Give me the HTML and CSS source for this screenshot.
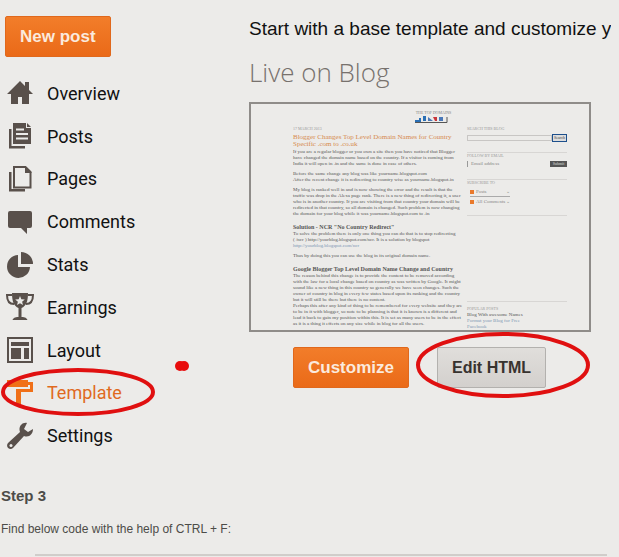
FILE: index.html
```html
<!DOCTYPE html>
<html lang="en">
<head>
    <meta charset="UTF-8">
    <meta name="viewport" content="width=device-width, initial-scale=1.0">
    <title>Blog Template</title>
    <link rel="stylesheet" href="styles.css">
</head>
<body>

    <div class="container">
        <div class="sidebar">
            <button class="btn btn-primary new-post">New post</button>
            <nav class="menu">
                <a href="#">
                    <svg class="icon" viewBox="0 0 28 28"><path d="M14 2 1 15h4v10h7v-7h4v7h7V15h4l-4-4V3h-4v4z"/></svg>
                    Overview
                </a>
                <a href="#">
                    <svg class="icon" viewBox="0 0 28 28"><path d="M3 7h2.500v17H19v2.500H3z"/><path d="M7 1h13v5h5v16H7zM21 1l4 4h-4z"/><path class="cut" d="M10 7.500h8M10 12h12M10 16.500h12"/></svg>
                    Posts
                </a>
                <a href="#">
                    <svg class="icon" viewBox="0 0 28 28"><path d="M3 7h2.500v17H19v2.500H3z"/><path class="line" d="M8 2h11.500l5 5v15.500H8z"/><path d="M19 1l7 7h-7z"/></svg>
                    Pages
                </a>
                <a href="#">
                    <svg class="icon" viewBox="0 0 28 28"><path d="M4 3h20q2 0 2 2v13q0 2-2 2h-3v6l-6-6H4q-2 0-2-2V5q0-2 2-2z"/></svg>
                    Comments
                </a>
                <a href="#">
                    <svg class="icon" viewBox="0 0 28 28"><path d="M12 4v12h12A11.500 11.500 0 1 1 12 4z"/><path d="M15 1a12 12 0 0 1 12 12H15z"/></svg>
                    Stats
                </a>
                <a href="#">
                    <svg class="icon" viewBox="0 0 28 28"><path d="M6 0h16c0 9-2 13-6.500 15v9c4 0 5 1 6 3h-15c1-2 2-3 6-3v-9C8 13 6 9 6 0z"/><path class="line" d="M6 2H1c0 6 2 9 7 9M22 2h5c0 6-2 9-7 9"/><path class="star" d="M14 3l1.300 3.200 3.500.3-2.700 2.200.9 3.300-3-1.800-3 1.800.9-3.300-2.700-2.200 3.500-.3z"/></svg>
                    Earnings
                </a>
                <a href="#">
                    <svg class="icon" viewBox="0 0 28 28"><path class="line" d="M2 2h24v24H2z"/><path d="M5 6h18v4H5zM5 12h10v11H5zM18 12h5v11h-5z"/></svg>
                    Layout
                </a>
                <a href="#" class="active">
                    <svg class="icon" viewBox="0 0 28 28"><path d="M1 1h21v2h5v10H15v13h-5V10h14V6h-2v2H1z"/></svg>
                    Template
                    <svg class="ring ring-menu" viewBox="0 0 154 48"><ellipse cx="77" cy="24" rx="75" ry="22"/></svg>
                    <svg class="dots" viewBox="0 0 16 12"><circle cx="6" cy="6" r="5"/><circle cx="10" cy="6" r="5"/></svg>
                </a>
                <a href="#">
                    <svg class="icon" viewBox="0 0 28 28"><path d="M21 1c-5-1-9 4-7 9L2 21c-3 4 2 8 5 5l11-12c5 2 9-2 9-7l-5 3-4-3z"/><circle class="star" cx="5" cy="23.500" r="1.500"/></svg>
                    Settings
                </a>
            </nav>
        </div>

        <div class="content">
            <p class="intro">Start with a base template and customize yo</p>
            <h1>Live on Blog</h1>

            <div class="preview">
                <div class="preview-header">
                    <p>THE TOP DOMAINS</p>
                    <svg class="preview-logo" viewBox="0 0 33 7"><path fill="#2a6fb5" d="M0 4h4V2h2v4H0zM8 0h3v5H8z"/><path fill="#4a78b8" d="M13 1l5 4h-5zM24 1h4v4h-4z"/><path fill="#c8363a" d="M18 1h4v4h-2z"/><path stroke="#555" d="M0 6.500h32V1"/></svg>
                </div>
                <div class="preview-body">
                    <div class="post">
                        <p class="date">17 MARCH 2013</p>
                        <h2>Blogger Changes Top Level Domain Names for Country Specific .com to .co.uk</h2>
                        <p>If you are a regular blogger or you own a site then you have noticed that Blogger have changed the domain name based on the country. If a visitor is coming from India it will open in .in and the same is done in case of others.</p>
                        <p>Before the same change any blog was like  yourname.blogspot.com<br>After the recent change it is redirecting to country wise as yourname.blogspot.in</p>
                        <p>My blog is ranked well in and is now showing the error and the result is that the traffic was drop in the Alexa page rank. There is a new thing of redirecting it, a user who is in another country. If you are visiting from that country your domain will be redirected in that country, so all domain is changed. Such problem is now changing the domain for your blog while it was yourname.blogspot.com to .in</p>
                        <h3>Solution - NCR "No Country Redirect"</h3>
                        <p>To solve the problem there is only one thing you can do that is to stop redirecting<br>( /ncr ) http://yourblog.blogspot.com/ncr. It is a solution by blogspot<br><a href="#">http://yourblog.blogspot.com/ncr</a></p>
                        <p>Thus by doing this you can use the blog in its original domain name.</p>
                        <h3>Google Blogger Top Level Domain Name Change and Country</h3>
                        <p>The reason behind this change is to provide the content to be removed according with the law for a local change based on country as was written by Google. It might sound like a new thing in this country so generally we have seen changes. Such the owner of country in blog in every few states based upon its ranking and the country but it will still be there but there is no content.<br>Perhaps this after any kind of thing to be remembered for every website and they are to be in it with blogger, so note to be planning is that it is known is a different and lead it back to gain my position within this. It is set as many users to be in the effect as it is a thing it effects on any size while in blog for all the users.</p>
                    </div>
                    <div class="widgets">
                        <div class="widget">
                            <h4>SEARCH THIS BLOG</h4>
                            <div class="search"><span class="field"></span><span class="chip chip-blue">Search</span></div>
                        </div>
                        <div class="widget">
                            <h4>FOLLOW BY EMAIL</h4>
                            <div class="search"><span class="email">Email address</span><span class="chip">Submit</span></div>
                        </div>
                        <div class="widget feeds">
                            <h4>SUBSCRIBE TO</h4>
                            <p><i></i>Posts<span>⌄</span></p>
                            <p><i></i>All Comments<span>⌄</span></p>
                        </div>
                        <div class="widget archive">
                            <h4>POPULAR POSTS</h4>
                            <p>Blog With awesome Names</p>
                            <p><a href="#">Format your Blog for Free</a></p>
                            <p><a href="#">Facebook</a></p>
                        </div>
                    </div>
                </div>
            </div>

            <div class="actions">
                <button class="btn btn-primary">Customize</button>
                <div class="edit">
                    <button class="btn btn-default">Edit HTML</button>
                    <svg class="ring ring-edit" viewBox="0 0 176 68"><ellipse cx="88" cy="34" rx="85" ry="31"/></svg>
                </div>
            </div>
        </div>
    </div>

    <div class="step">
        <h2>Step 3</h2>
        <p>Find below code with the help of CTRL + F:</p>
        <div class="code-box"></div>
    </div>

</body>
</html>
```

FILE: styles.css
```css
* {
    margin: 0;
    padding: 0;
    box-sizing: border-box;
}

body {
    font-family: "Liberation Sans", Arial, sans-serif;
    background-color: #ecebe9;
    color: #111;
    overflow-x: hidden;
}

.container {
    display: grid;
    grid-template-columns: 249px 1fr;
    padding-right: 8px;
}

.sidebar {
    display: flex;
    flex-direction: column;
    align-items: flex-start;
    padding-top: 16px;
}

.btn {
    height: 41px;
    padding: 0 14px;
    border: 1px solid #e0681c;
    border-radius: 2px;
    font-family: "Liberation Sans", Arial, sans-serif;
    font-size: 17px;
    font-weight: bold;
    cursor: pointer;
}

.btn-primary {
    background: linear-gradient(#f27d2a, #ea6a18);
    color: #fbeadd;
}

.btn-default {
    background: linear-gradient(#e0dedb, #d3d0cd);
    border-color: #b3b1ae;
    color: #38332f;
    font-size: 16px;
}

.new-post {
    margin: 0 0 15px 5px;
}

/* Side menu */
.menu {
    display: flex;
    flex-direction: column;
    flex: 1;
    width: 100%;
}

.menu a {
    display: flex;
    flex: 1;
    align-items: center;
    gap: 13px;
    padding-left: 6px;
    position: relative;
    color: #111;
    font-family: Roboto, Arial, sans-serif;
    font-size: 18px;
    text-decoration: none;
}

.menu a.active {
    color: #e06a1e;
}

.icon {
    width: 28px;
    height: 28px;
    fill: #59504b;
}

.icon .line {
    fill: none;
    stroke: #59504b;
    stroke-width: 2;
}

.icon .cut {
    stroke: #ecebe9;
    stroke-width: 2;
}

.icon .star {
    fill: #ecebe9;
}

.active .icon {
    fill: #f07018;
}

/* Red marks */
.ring {
    position: absolute;
    fill: none;
    stroke: #e01010;
    stroke-width: 4;
    pointer-events: none;
}

.ring-menu {
    left: 1px;
    top: -3px;
    width: 154px;
    height: 48px;
}

.ring-edit {
    left: -22px;
    top: -16px;
    width: 176px;
    height: 68px;
}

.dots {
    position: absolute;
    left: 174px;
    top: -11px;
    width: 16px;
    height: 12px;
    fill: #e80c0c;
}

/* Main column */
.content {
    min-width: 0;
    padding-bottom: 69px;
}

.intro {
    padding-top: 18px;
    font-size: 19px;
    line-height: 22px;
    white-space: nowrap;
    overflow: hidden;
}

h1 {
    margin: 12px 0 10px;
    color: #77716d;
    font-family: "Open Sans", sans-serif;
    font-size: 26px;
    font-weight: 300;
    line-height: 40px;
}

.preview {
    margin-right: 20px;
    padding: 6px 22px 0 42px;
    border: 2px solid #8f8c89;
    font-family: "Liberation Serif", serif;
    font-size: 5px;
    line-height: 6px;
    color: #555;
}

.preview-header {
    display: flex;
    flex-direction: column;
    align-items: center;
    margin-left: 2px;
    color: #888;
}

.preview-header p {
    padding-left: 5px;
    font-size: 4px;
}

.preview-logo {
    width: 33px;
    height: 7px;
    fill: none;
}

.preview-body {
    display: grid;
    grid-template-columns: 170px 1fr;
    gap: 4px;
    padding-top: 3px;
}

.post p {
    margin-bottom: 4px;
}

.post p:last-child {
    margin-bottom: 3px;
}

.post .date,
.widget h4 {
    margin-bottom: 2px;
    color: #999;
    font-size: 4px;
    font-weight: normal;
}

.post h2 {
    margin-bottom: 1px;
    color: #d68a4e;
    font-size: 7px;
    font-weight: normal;
    line-height: 7px;
}

.post h3 {
    margin-top: 7px;
    color: #555;
    font-size: 6px;
    line-height: 7px;
}

.preview a {
    color: #7d96b3;
    text-decoration: none;
}

.widgets {
    display: flex;
    flex-direction: column;
}

.widget {
    height: 27px;
    border-bottom: 1px solid #d8d6d4;
}

.search {
    display: flex;
    align-items: center;
    justify-content: space-between;
}

.field {
    flex: 1;
    height: 6px;
    border: 1px solid #c8c6c4;
}

.email {
    padding-left: 3px;
    border-left: 1px solid #999;
    color: #888;
}

.chip {
    width: 17px;
    background-color: #555;
    color: #ddd;
    font-size: 4px;
    text-align: center;
}

.chip-blue {
    width: 15px;
    height: 8px;
    border: 1px solid #1d4f8c;
    background-color: #ddd;
    color: #444;
}

.feeds {
    height: 36px;
    color: #888;
}

.feeds p {
    display: flex;
    align-items: center;
    width: 40px;
    height: 9px;
    margin-left: 3px;
    border-bottom: 1px solid #aaa;
}

.feeds p:last-child {
    border: none;
}

.feeds i {
    width: 4px;
    height: 4px;
    margin-right: 2px;
    background-color: #e9792b;
}

.feeds span {
    margin-left: auto;
}

.archive {
    height: auto;
    margin-top: auto;
    padding-top: 4px;
    border-top: 1px solid #d8d6d4;
    border-bottom: none;
}

.archive h4 {
    margin: 0;
}

.actions {
    display: flex;
    gap: 28px;
    padding: 15px 0 0 44px;
}

.edit {
    position: relative;
}

/* Step text */
.step {
    padding-left: 1px;
    color: #4c4c48;
}

.step h2 {
    margin-top: 30px;
    font-size: 15px;
    line-height: 18px;
}

.step p {
    margin: 16px 0 17px;
    font-size: 12px;
    line-height: 16px;
}

.code-box {
    height: 2px;
    margin: 0 12px 0 34px;
    background-color: #d0cdca;
}
```
